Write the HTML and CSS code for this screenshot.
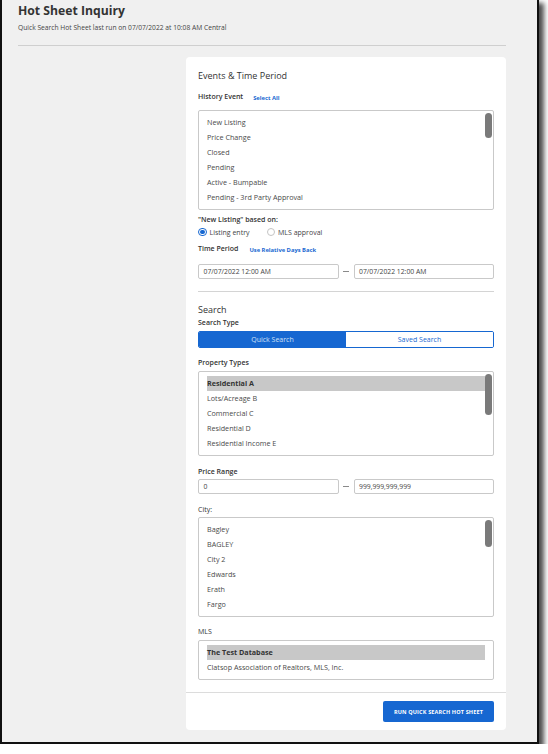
FILE: index.html
```html
<!DOCTYPE html>
<html>
<head>
<meta charset="utf-8">
<link rel="stylesheet" href="styles.css">
</head>
<body>
<div class="window">
  <header class="page-header">
    <h1 class="page-title">Hot Sheet Inquiry</h1>
    <p class="subtitle">Quick Search Hot Sheet last run on 07/07/2022 at 10:08 AM Central</p>
  </header>
  <div class="content">
    <aside class="sidebar"></aside>
    <main class="card">
      <div class="card-body">
        <h2 class="section-title">Events &amp; Time Period</h2>
        <div class="label-row mt-history">
          <span class="label">History Event</span>
          <a class="link">Select All</a>
        </div>
        <div class="listbox list-history">
          <div class="item">New Listing</div>
          <div class="item">Price Change</div>
          <div class="item">Closed</div>
          <div class="item">Pending</div>
          <div class="item">Active - Bumpable</div>
          <div class="item">Pending - 3rd Party Approval</div>
          <div class="thumb thumb-history"></div>
        </div>
        <div class="label mt-based">"New Listing" based on:</div>
        <div class="radio-row">
          <label class="radio"><span class="radio-dot checked"></span>Listing entry</label>
          <label class="radio"><span class="radio-dot"></span>MLS approval</label>
        </div>
        <div class="label-row mt-time">
          <span class="label">Time Period</span>
          <a class="link link-rel">Use Relative Days Back</a>
        </div>
        <div class="range mt-range1">
          <div class="input">07/07/2022 12:00 AM</div>
          <span class="dash"></span>
          <div class="input">07/07/2022 12:00 AM</div>
        </div>
        <hr class="divider">
        <h2 class="section-title mt-search">Search</h2>
        <div class="label mt-stype">Search Type</div>
        <div class="segmented">
          <div class="seg active">Quick Search</div>
          <div class="seg">Saved Search</div>
        </div>
        <div class="label mt-ptypes">Property Types</div>
        <div class="listbox list-ptypes">
          <div class="item selected">Residential A</div>
          <div class="item">Lots/Acreage B</div>
          <div class="item">Commercial C</div>
          <div class="item">Residential D</div>
          <div class="item">Residential Income E</div>
          <div class="thumb thumb-ptypes"></div>
        </div>
        <div class="label mt-price">Price Range</div>
        <div class="range mt-range2">
          <div class="input">0</div>
          <span class="dash"></span>
          <div class="input">999,999,999,999</div>
        </div>
        <div class="label label-plain mt-city">City:</div>
        <div class="listbox list-city">
          <div class="item">Bagley</div>
          <div class="item">BAGLEY</div>
          <div class="item">City 2</div>
          <div class="item">Edwards</div>
          <div class="item">Erath</div>
          <div class="item">Fargo</div>
          <div class="thumb thumb-city"></div>
        </div>
        <div class="label label-plain mt-mls">MLS</div>
        <div class="listbox list-mls">
          <div class="item selected">The Test Database</div>
          <div class="item">Clatsop Association of Realtors, MLS, Inc.</div>
        </div>
      </div>
      <footer class="card-footer">
        <button class="btn-primary">RUN QUICK SEARCH HOT SHEET</button>
      </footer>
    </main>
  </div>
</div>
</body>
</html>
```

FILE: styles.css
```css
* { box-sizing: border-box; }
html, body { margin: 0; padding: 0; background: #ffffff; }
body { font-family: "Open Sans", "Noto Sans", sans-serif; color: #333; }

.window {
  width: 539px;
  height: 744px;
  background: #f0f0f0;
  border-left: 2px solid #111;
  border-right: 2px solid #111;
  border-bottom: 2px solid #111;
  box-shadow: 4px 4px 5px 1px rgba(0,0,0,0.7);
  display: flex;
  flex-direction: column;
}

.page-header {
  padding: 0 31px 0 16px;
}
.page-title {
  margin: 0;
  padding-top: 2px;
  font-size: 12.2px;
  line-height: 18px;
  font-weight: 700;
  color: #333;
}
.subtitle {
  margin: 3px 0 0;
  font-size: 6.7px;
  line-height: 10px;
  color: #444;
  padding-bottom: 12px;
  border-bottom: 1px solid #cfcfcf;
}

.content {
  display: flex;
  padding: 11px 31px 0 16px;
}
.sidebar { width: 168px; flex: none; }
.card {
  flex: 1;
  background: #fff;
  border-radius: 4px;
  display: flex;
  flex-direction: column;
}
.card-body {
  padding: 13px 12px 12px 12px;
  display: flex;
  flex-direction: column;
}

.section-title {
  margin: 0;
  font-size: 9px;
  line-height: 12px;
  font-weight: 400;
  color: #333;
}

.label-row { display: flex; align-items: center; height: 10px; }
.label {
  font-size: 7px;
  line-height: 10px;
  font-weight: 600;
  color: #333;
}
.label-plain { font-weight: 400; }
.link {
  font-size: 5.8px;
  font-weight: 700;
  color: #1667d1;
  margin-left: 10px;
  margin-top: 1px;
}
.link-rel { margin-left: 11px; }

.mt-history { margin-top: 10px; }
.mt-based { margin-top: 5px; }
.mt-time { margin-top: 7px; }
.mt-range1 { margin-top: 10px; }
.mt-search { margin-top: 12px; }
.mt-stype { margin-top: 2px; }
.mt-ptypes { margin-top: 10px; }
.mt-price { margin-top: 11px; }
.mt-range2 { margin-top: 2px; }
.mt-city { margin-top: 11px; }
.mt-mls { margin-top: 10px; }

.listbox {
  position: relative;
  border: 1px solid #c9c9c9;
  border-radius: 2px;
  padding: 4px 8px 4px 8px;
}
.list-history { margin-top: 8px; }
.list-ptypes { margin-top: 3px; }
.list-city { margin-top: 2px; }
.list-mls { margin-top: 3px; }

.item {
  height: 15px;
  line-height: 15px;
  font-size: 7.2px;
  color: #4a4a4a;
  white-space: nowrap;
}
.item.selected {
  background: #c8c8c8;
  font-weight: 700;
  color: #333;
}

.thumb {
  position: absolute;
  right: 1.5px;
  width: 6.5px;
  background: #7a7a7a;
  border-radius: 3.5px;
}
.thumb-history { top: 1.5px; height: 25px; }
.thumb-ptypes { top: 2px; height: 41px; }
.thumb-city { top: 2px; height: 27px; }

.radio-row {
  display: flex;
  align-items: center;
  height: 10px;
  margin-top: 2px;
}
.radio {
  display: flex;
  align-items: center;
  font-size: 7px;
  color: #444;
}
.radio + .radio { margin-left: 17px; }
.radio-dot {
  width: 8.5px;
  height: 8.5px;
  border-radius: 50%;
  border: 1px solid #c4c4c4;
  background: #fff;
  margin-right: 3px;
  flex: none;
  position: relative;
}
.radio-dot.checked {
  border: 1.2px solid #1667d1;
}
.radio-dot.checked::after {
  content: "";
  position: absolute;
  left: 1px; top: 1px; right: 1px; bottom: 1px;
  border-radius: 50%;
  background: #1667d1;
}

.range {
  display: flex;
  align-items: center;
}
.input {
  flex: 1;
  height: 15px;
  border: 1px solid #c9c9c9;
  border-radius: 2px;
  font-size: 6.8px;
  line-height: 13px;
  padding-left: 4.5px;
  color: #444;
}
.dash {
  width: 6px;
  height: 1.5px;
  background: #8a8a8a;
  margin: 0 4.5px 0 4.5px;
  flex: none;
}

.divider {
  margin: 12px 0 0;
  border: 0;
  border-top: 1px solid #d4d4d4;
  height: 0;
}

.segmented {
  display: flex;
  height: 17px;
  margin-top: 3px;
  border: 1px solid #1667d1;
  border-radius: 2px;
  overflow: hidden;
}
.seg {
  flex: 1;
  text-align: center;
  font-size: 7px;
  line-height: 15px;
  color: #1667d1;
  background: #fff;
}
.seg.active {
  background: #1667d1;
  color: #cfe0f7;
}

.card-footer {
  border-top: 1px solid #dcdcdc;
  display: flex;
  justify-content: flex-end;
  padding: 8px 12px 8px 12px;
}
.btn-primary {
  width: 111px;
  height: 21px;
  border: 0;
  border-radius: 2px;
  background: #1667d1;
  color: #fff;
  font-family: "Open Sans", "Noto Sans", sans-serif;
  font-size: 5.5px;
  font-weight: 700;
  letter-spacing: 0.15px;
  padding: 0;
}
```
